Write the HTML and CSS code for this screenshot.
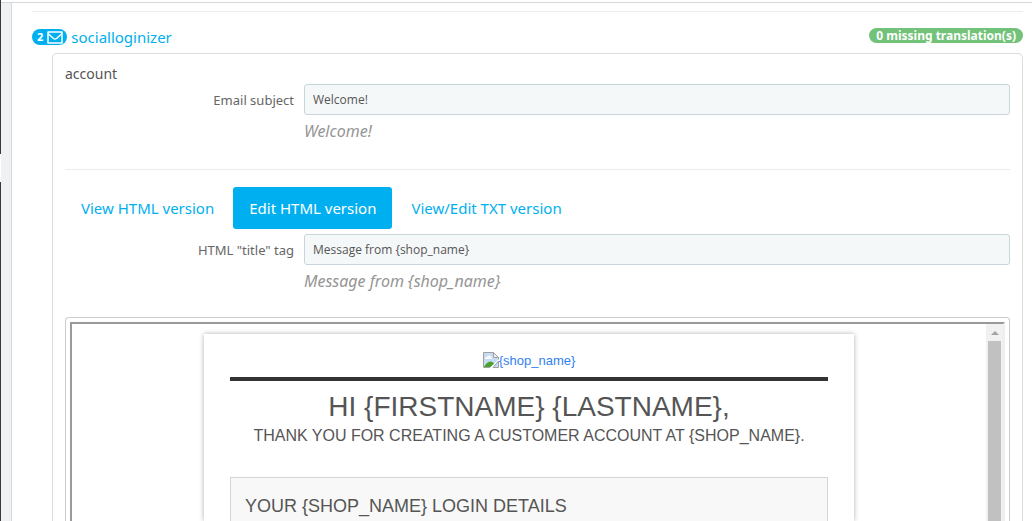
FILE: index.html
```
<!DOCTYPE html>
<html lang="en">
<head>
    <meta charset="UTF-8">
    <meta name="viewport" content="width=device-width, initial-scale=1.0">
    <title>Email translations</title>
    <link rel="stylesheet" href="styles.css">
</head>
<body>

<div class="page">
    <div class="nav-edge"><span class="nav-notch"></span></div>
    <div class="content">
        <div class="panel-top"></div>
        <main class="panel">
            <div class="panel-body">
                <hr class="separator">
                <div class="module-head">
                    <a href="#mails" class="module-link">
                        <span class="badge">2
                            <svg width="16" height="13" viewBox="0 0 16 13" fill="none" stroke="#fff" stroke-width="1.5" stroke-linejoin="round">
                                <rect x="1" y="1" width="14" height="11"/>
                                <path d="M1 2.5l5.5 5q1.5 1.2 3 0L15 2.5"/>
                            </svg>
                        </span>
                        <span>socialloginizer</span>
                    </a>
                    <span class="label-success">0 missing translation(s)</span>
                </div>

                <section class="mails" id="mails">
                    <div class="mail-name">account</div>
                    <div class="form-row">
                        <label for="subject">Email subject</label>
                        <div class="field">
                            <input type="text" id="subject" value="Welcome!">
                            <p class="help">Welcome!</p>
                        </div>
                    </div>
                    <hr class="separator">
                    <nav class="tabs">
                        <a href="#view-html">View HTML version</a>
                        <a href="#edit-html" class="active">Edit HTML version</a>
                        <a href="#edit-txt">View/Edit TXT version</a>
                    </nav>
                    <div class="form-row">
                        <label for="title-tag">HTML "title" tag</label>
                        <div class="field">
                            <input type="text" id="title-tag" value="Message from {shop_name}">
                            <p class="help">Message from {shop_name}</p>
                        </div>
                    </div>

                    <div class="thumbnail" id="edit-html">
                        <div class="frame">
                            <div class="frame-view">
                                <article class="email">
                                    <a href="#shop" class="logo">
                                        <svg width="16" height="16" viewBox="0 0 16 16">
                                            <path d="M.5.5h10l5 5v10H.5z" fill="#fff" stroke="#a0a0a0"/>
                                            <path d="M1 1h9v5h5v9H1z" fill="#c6dbf5"/>
                                            <path d="M2 7q0-2 2-2 .5-2 2.500-1.500Q8 4 8 5.500q1.500 0 1.500 1.500z" fill="#fff"/>
                                            <path d="M1 15q2-4.500 6-5.500 4 0 6 5.500z" fill="#4aa22d"/>
                                            <path d="M16 7L6.500 16H16z" fill="#fff"/>
                                            <path d="M15.500 9v6.500H10z" fill="#c6dbf5" stroke="#a0a0a0"/>
                                            <path d="M10.500.5v5h5z" fill="#eee" stroke="#a0a0a0"/>
                                        </svg>{shop_name}</a>
                                    <h1>Hi {firstname} {lastname},</h1>
                                    <p class="intro">Thank you for creating a customer account at {shop_name}.</p>
                                    <div class="details">
                                        <h2>Your {shop_name} login details</h2>
                                    </div>
                                </article>
                            </div>
                            <div class="scrollbar">
                                <span class="arrow"></span>
                                <span class="thumb"></span>
                            </div>
                        </div>
                    </div>
                </section>
            </div>
        </main>
    </div>
</div>

</body>
</html>
```

FILE: styles.css
```
* {
    box-sizing: border-box;
}
body {
    margin: 0;
    font-family: "Noto Sans", "Open Sans", sans-serif;
    font-size: 13px;
    color: #555;
    background: #fff;
}
a {
    color: #00aff0;
    text-decoration: none;
}
.page {
    display: flex;
    height: 100vh;
    overflow: hidden;
}

/* left edge */
.nav-edge {
    width: 1px;
    padding-top: 154px;
    background: #363a41;
}
.nav-notch {
    display: block;
    height: 28px;
    background: #fff;
}

.content {
    flex: 1;
    min-width: 0;
    display: flex;
    flex-direction: column;
}
.panel-top {
    height: 3px;
    flex-shrink: 0;
    border-bottom: 1px solid #d3d8db;
}
.panel {
    flex: 1;
    min-height: 0;
    display: flex;
    padding-left: 10px;
    background: #eff1f2;
}
.panel-body {
    flex: 1;
    min-width: 0;
    display: flex;
    flex-direction: column;
    padding: 8px 9px 0 20px;
    border-left: 1px solid #d3d8db;
    background: #fff;
}
.separator {
    width: 100%;
    margin: 0;
    border: 0;
    border-top: 1px solid #eaedef;
}
.module-head {
    display: flex;
    justify-content: space-between;
    align-items: center;
    padding: 14px 0 5px;
    height: 41px;
}
.module-link {
    display: flex;
    align-items: center;
    gap: 4px;
    font-size: 15px;
    line-height: 22px;
}
.badge {
    display: flex;
    align-items: center;
    gap: 4px;
    height: 16px;
    padding: 0 4px 0 5px;
    border-radius: 8px;
    background: #00aff0;
    color: #fff;
    font-size: 11px;
    font-weight: bold;
}
.label-success {
    height: 15px;
    margin-bottom: 4px;
    padding: 0 7px;
    border-radius: 8px;
    background: #72c279;
    color: #fff;
    font-size: 12px;
    font-weight: bold;
    line-height: 15px;
}

.mails {
    flex: 1;
    min-height: 0;
    display: flex;
    flex-direction: column;
    margin-left: 20px;
    padding: 10px 12px 0;
    border: 1px solid #ddd;
    border-bottom: 0;
    border-radius: 5px 5px 0 0;
}
.mail-name {
    font-size: 14px;
    line-height: 20px;
}
.form-row {
    display: flex;
    gap: 10px;
}
.form-row label {
    width: 229px;
    padding-top: 6px;
    line-height: 20px;
    text-align: right;
    color: #666;
}
.field {
    flex: 1;
}
.field input {
    display: block;
    width: 100%;
    height: 31px;
    padding: 0 8px;
    border: 1px solid #c7d6db;
    border-radius: 3px;
    background: #f5f8f9;
    color: #555;
    font-family: "Open Sans", sans-serif;
    font-size: 12px;
}
.help {
    margin: 5px 0 26px;
    font-size: 16px;
    font-style: italic;
    line-height: 23px;
    color: #959595;
}
.tabs {
    display: flex;
    gap: 3px;
    margin: 17px 0 5px;
}
.tabs a {
    padding: 10px 16px;
    border-radius: 3px;
    font-size: 15px;
    line-height: 22px;
}
.tabs .active {
    background: #00aff0;
    color: #fff;
}

/* mail preview */
.thumbnail {
    flex: 1;
    min-height: 0;
    display: flex;
    padding: 4px 4px 0;
    margin-top: -2px;
    border: 1px solid #ccc;
    border-bottom: 0;
    border-radius: 4px 4px 0 0;
}
.frame {
    flex: 1;
    display: flex;
    border: 2px solid #999;
    border-right-color: #eee;
    border-bottom: 0;
    overflow: hidden;
}
.frame-view {
    flex: 1;
    display: flex;
    justify-content: center;
    padding-top: 10px;
    font-family: "Liberation Sans", Arial, sans-serif;
}
.email {
    width: 650px;
    padding: 18px 26px 0;
    box-shadow: 0 0 5px #afafaf;
    text-align: center;
}
.logo {
    display: flex;
    justify-content: center;
    padding-bottom: 9px;
    border-bottom: 4px solid #333;
    color: #337ff1;
    line-height: 18px;
    height: 29px;
}
.email h1 {
    margin: 9px 0 0;
    font-size: 28px;
    font-weight: normal;
    line-height: 34px;
    text-transform: uppercase;
}
.intro {
    margin: 0 0 29px;
    font-size: 16px;
    line-height: 24px;
    text-transform: uppercase;
}
.details {
    height: 100px;
    padding: 17px 14px;
    border: 1px solid #d6d4d4;
    background: #f8f8f8;
    text-align: left;
}
.details h2 {
    margin: 0;
    font-size: 18px;
    font-weight: normal;
    line-height: 22px;
    text-transform: uppercase;
}
.scrollbar {
    display: flex;
    flex-direction: column;
    align-items: center;
    width: 17px;
    padding-top: 7px;
    background: #f1f1f1;
}
.arrow {
    border: 4px solid transparent;
    border-top: 0;
    border-bottom-color: #a3a3a3;
    margin-bottom: 6px;
}
.thumb {
    flex: 1;
    width: 13px;
    background: #c1c1c1;
}
```
